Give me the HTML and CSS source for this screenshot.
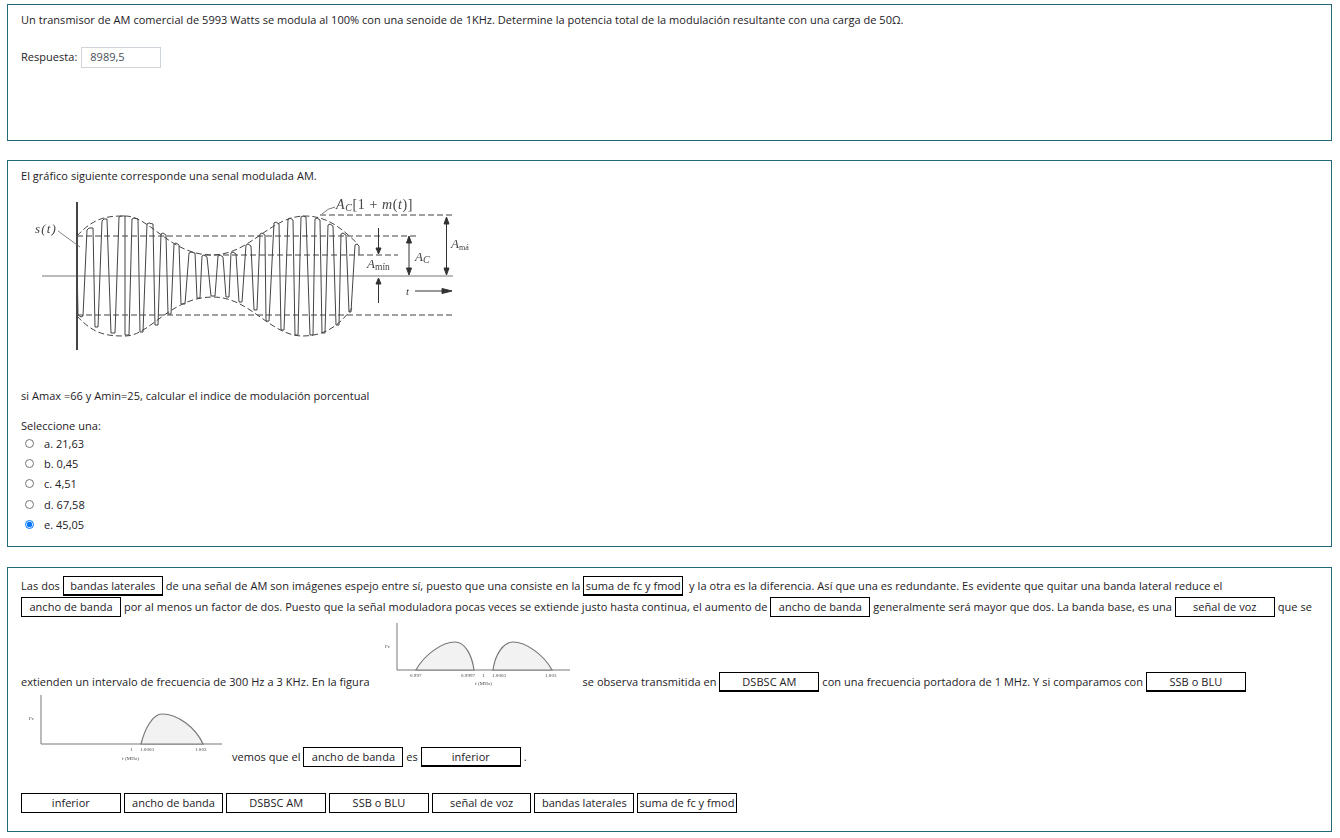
FILE: index.html
```html
<!DOCTYPE html>
<html lang="es">
<head>
    <meta charset="UTF-8">
    <title>Cuestionario AM</title>
    <link rel="stylesheet" href="styles.css">
</head>
<body>
    <div class="quiz">
        <div class="que que-short">
            <p class="qtext">Un transmisor de AM comercial de 5993 Watts se modula al 100% con una senoide de 1KHz. Determine la potencia total de la modulación resultante con una carga de 50Ω.</p>
            <div class="answer-line">
                <label for="resp">Respuesta:</label>
                <input id="resp" class="answer-input" type="text" value="8989,5">
            </div>
        </div>

        <div class="que que-multi">
            <p class="qtext">El gráfico siguiente corresponde una senal modulada AM.</p>
            <svg class="am-graph" viewBox="21 190 450 170" width="450" height="170">
                <defs>
                    <filter id="soft"><feGaussianBlur stdDeviation="0.45"/></filter>
                </defs>
                <g filter="url(#soft)" fill="none">
                    <path d="M42 276H453" stroke="#777" stroke-width="1"/>
                    <path d="M77 202V350" stroke="#444" stroke-width="2"/>
                    <path d="M58 231L80 247" stroke="#666" stroke-width="0.8"/>
                    <path d="M322 214Q328 208 335 207" stroke="#555" stroke-width="0.8"/>
                    <g stroke="#444" stroke-width="1" stroke-dasharray="6 3">
                        <path d="M320 215H455"/>
                        <path d="M77 236H417"/>
                        <path d="M205 255H398"/>
                        <path d="M77 315H455"/>
                        <path d="M77 236C95 216 110 216 125 216C150 216 170 255 212 255C250 255 270 216 305 216C330 216 345 232 358 244"/>
                        <path d="M77 316C95 336 110 336 125 336C150 336 170 297 213 297C250 297 270 336 303 336C325 336 340 325 352 308"/>
                    </g>
                    <path stroke="#444" stroke-width="1" stroke-linejoin="round" d="M77 262L78 315L81 317L83 316L87 230L89 228L93 228L95 327L98 327L102 221L104 219L107 219L111 333L115 333L119 217L121 216L125 216L125 335L129 335L132 219L134 218L138 219L140 332L143 332L147 224L149 223L153 224L155 325L158 325L161 234L163 233L166 235L168 314L171 314L174 244L176 243L179 245L181 304L185 304L189 253L191 252L195 253L197 298L200 298L202 256L204 255L207 257L211 296L215 296L218 256L220 255L223 257L226 297L229 297L231 253L233 252L236 254L239 302L242 302L246 245L248 244L251 246L254 310L257 310L260 234L262 233L265 235L266 321L269 321L274 223L276 222L279 224L281 330L284 330L288 219L290 218L293 220L295 335L298 335L301 217L303 216L306 217L310 335L313 335L315 219L317 218L320 220L322 333L325 333L328 225L330 224L333 226L336 325L339 325L341 234L343 233L346 235L349 312L351 312L355 245L357 244L359 246L359 255"/>
                    <g stroke="#333" stroke-width="1" fill="#333">
                        <path d="M378.500 228V252"/>
                        <path d="M376 248L378.500 254L381 248Z"/>
                        <path d="M378.500 280V303"/>
                        <path d="M376 284L378.500 278L381 284Z"/>
                        <path d="M409 238V273"/>
                        <path d="M406.500 243L409 236L411.500 243Z"/>
                        <path d="M406.500 268L409 275L411.500 268Z"/>
                        <path d="M446.500 219V273"/>
                        <path d="M444 224L446.500 217L449 224Z"/>
                        <path d="M444 268L446.500 275L449 268Z"/>
                        <path d="M415 291H445"/>
                        <path d="M442 288.500L452 291L442 293.500Z"/>
                    </g>
                    <g class="fig-text">
                        <text x="35" y="233" font-style="italic" font-size="13" letter-spacing="1.200">s(t)</text>
                        <text x="336" y="209" font-size="14" letter-spacing="0.600"><tspan font-style="italic">A</tspan><tspan font-size="10" dy="2" font-style="italic">C</tspan><tspan dy="-2">[1 + </tspan><tspan font-style="italic">m</tspan>(<tspan font-style="italic">t</tspan>)]</text>
                        <text x="367" y="268" font-style="italic" font-size="13">A<tspan font-size="9.500" dy="2" font-style="normal">mín</tspan></text>
                        <text x="415" y="261" font-style="italic" font-size="13">A<tspan font-size="10" dy="2">C</tspan></text>
                        <text x="451" y="248" font-style="italic" font-size="13">A<tspan font-size="8" dy="2" font-style="normal">má</tspan></text>
                        <text x="406" y="295" font-style="italic" font-size="11">t</text>
                    </g>
                </g>
            </svg>
            <p class="qtext after-graph">si Amax =66 y Amin=25, calcular el indice de modulación porcentual</p>
            <div class="prompt">Seleccione una:</div>
            <div class="options">
                <label class="option"><input type="radio" name="q2"><span>a. 21,63</span></label>
                <label class="option"><input type="radio" name="q2"><span>b. 0,45</span></label>
                <label class="option"><input type="radio" name="q2"><span>c. 4,51</span></label>
                <label class="option"><input type="radio" name="q2"><span>d. 67,58</span></label>
                <label class="option"><input type="radio" name="q2" checked><span>e. 45,05</span></label>
            </div>
        </div>

        <div class="que que-drag">
            <p class="drag-text">Las dos <span class="drop thick">bandas laterales</span> de una señal de AM son imágenes espejo entre sí, puesto que una consiste en la <span class="drop thick">suma de fc y fmod</span>&nbsp; y la otra es la diferencia. Así que una es redundante. Es evidente que quitar una banda lateral reduce el <span class="drop">ancho de banda</span> por al menos un factor de dos. Puesto que la señal moduladora pocas veces se extiende justo hasta continua, el aumento de <span class="drop">ancho de banda</span> generalmente será mayor que dos. La banda base, es una <span class="drop">señal de voz</span> que se extienden un intervalo de frecuencia de 300 Hz a 3 KHz. En la figura
                <svg class="spectrum" viewBox="373 617 207 69" width="207" height="69">
                    <g filter="url(#soft)">
                        <path d="M397 623V670H570" fill="none" stroke="#555" stroke-width="0.8"/>
                        <path d="M416 670C424 655 442 642 455 642C465 642 472 655 474 670Z" fill="#f2f2f2" stroke="#777" stroke-width="1.2"/>
                        <path d="M493 670C495 655 503 642 513 642C526 642 544 655 552 670Z" fill="#f2f2f2" stroke="#777" stroke-width="1.2"/>
                        <g class="fig-text" font-size="5" fill="#444">
                            <text x="410" y="677">0.997</text>
                            <text x="461" y="677">0.9997</text>
                            <text x="482" y="677">1</text>
                            <text x="492" y="677">1.0003</text>
                            <text x="545" y="677">1.003</text>
                            <text x="475" y="685">f (MHz)</text>
                            <text x="385" y="648">Fc</text>
                        </g>
                    </g>
                </svg>
                se observa transmitida en <span class="drop thick">DSBSC AM</span> con una frecuencia portadora de 1 MHz. Y si comparamos con <span class="drop thick">SSB o BLU</span>
                <svg class="spectrum" viewBox="21 692 208 69" width="208" height="69">
                    <g filter="url(#soft)">
                        <path d="M41 695V744H222" fill="none" stroke="#555" stroke-width="0.8"/>
                        <path d="M141 744C145 728 153 714 162 714C178 714 196 728 203 744Z" fill="#f2f2f2" stroke="#777" stroke-width="1.2"/>
                        <g class="fig-text" font-size="5" fill="#444">
                            <text x="130" y="751">1</text>
                            <text x="140" y="751">1.0003</text>
                            <text x="195" y="751">1.003</text>
                            <text x="122" y="760">f (MHz)</text>
                            <text x="29" y="720">Fc</text>
                        </g>
                    </g>
                </svg>
                vemos que el <span class="drop">ancho de banda</span> es <span class="drop thick">inferior</span> .
            </p>
            <div class="bank">
                <span class="drop">inferior</span>
                <span class="drop">ancho de banda</span>
                <span class="drop">DSBSC AM</span>
                <span class="drop">SSB o BLU</span>
                <span class="drop">señal de voz</span>
                <span class="drop">bandas laterales</span>
                <span class="drop">suma de fc y fmod</span>
            </div>
        </div>
    </div>
</body>
</html>
```

FILE: styles.css
```css
body {
    margin: 0;
    font-family: "Open Sans", sans-serif;
    font-size: 11px;
    letter-spacing: 0.03px;
    color: #1d2125;
    background-color: #fff;
}

p {
    margin: 0;
}

.quiz {
    display: flex;
    flex-direction: column;
    gap: 19px;
    padding: 4px 8px 0 7px;
}

.que {
    border: 1px solid #23697a;
    padding: 7px 13px 8px;
}

.que-short {
    box-sizing: border-box;
    height: 137px;
}

.que-drag {
    margin-top: 1px;
}

.qtext {
    line-height: 15px;
}

.answer-line {
    display: flex;
    align-items: center;
    gap: 4px;
    margin-top: 20px;
}

.answer-line label {
    margin-bottom: 2px;
}

.answer-input {
    width: 80px;
    height: 21px;
    box-sizing: border-box;
    border: 1px solid #ced4da;
    padding: 0 8px 2px;
    font-family: "Open Sans", sans-serif;
    font-size: 11px;
    color: #495057;
}

.am-graph {
    display: block;
    margin-top: 7px;
}

.fig-text {
    font-family: "Liberation Serif", serif;
    fill: #444;
    stroke: none;
}

.after-graph {
    margin-top: 28px;
}

.prompt {
    margin-top: 15px;
    line-height: 15px;
}

.options {
    display: flex;
    flex-direction: column;
    padding-bottom: 4px;
}

.option {
    display: flex;
    align-items: center;
    height: 20.300px;
    padding-left: 4px;
}

.option input {
    width: 9px;
    height: 9px;
    margin: 0 10px 0 0;
}

.drag-text {
    line-height: 21px;
    letter-spacing: 0.05px;
}

.drop {
    display: inline-block;
    box-sizing: border-box;
    width: 100px;
    height: 20px;
    border: 1px solid #000;
    line-height: 18px;
    text-align: center;
    white-space: nowrap;
}

.drop.thick {
    border-bottom-width: 2px;
}

.spectrum {
    vertical-align: baseline;
}

.bank {
    display: flex;
    gap: 3px;
    margin-top: 26px;
    padding-bottom: 10px;
}

.bank .drop {
    width: 99.700px;
}
```
